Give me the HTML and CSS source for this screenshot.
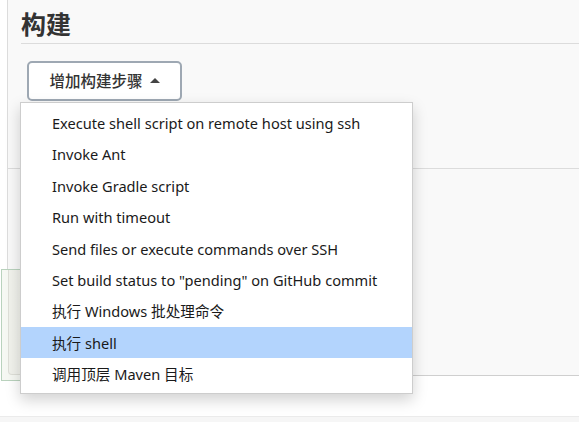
FILE: index.html
```html
<!DOCTYPE html>
<html lang="zh">
<head>
<meta charset="utf-8">
<link rel="stylesheet" href="styles.css">
</head>
<body>
<div class="page">
  <div class="panel">
    <h2 class="title">构建</h2>
    <div class="actions">
      <button class="add-btn">增加构建步骤 <span class="caret"></span></button>
    </div>
    <div class="section-line"></div>
  </div>
  <div class="ghost-box"><div class="ghost-inner"></div></div>
  <div class="footer"></div>
  <ul class="menu">
    <li>Execute shell script on remote host using ssh</li>
    <li>Invoke Ant</li>
    <li>Invoke Gradle script</li>
    <li>Run with timeout</li>
    <li>Send files or execute commands over SSH</li>
    <li>Set build status to "pending" on GitHub commit</li>
    <li>执行 Windows 批处理命令</li>
    <li class="active">执行 shell</li>
    <li>调用顶层 Maven 目标</li>
  </ul>
</div>
</body>
</html>
```
FILE: styles.css
```css
* { box-sizing: border-box; }
html, body { margin: 0; padding: 0; }
body {
  width: 579px;
  height: 422px;
  overflow: hidden;
  background: #fff;
  font-family: "Noto Sans", "Noto Sans CJK SC", sans-serif;
  color: #222;
}
.page { position: relative; height: 422px; }
.panel {
  margin-left: 7px;
  height: 376px;
  background: #f9f9f9;
  border-left: 1px solid #dcdcdc;
  border-bottom: 1px solid #cfcfcf;
  padding-left: 13px;
  padding-top: 7px;
}
.title {
  margin: 0;
  font-family: "Noto Sans CJK SC", sans-serif;
  font-size: 25px;
  font-weight: 700;
  color: #333;
  line-height: 32px;
  padding-bottom: 4px;
  border-bottom: 1px solid #dcdcdc;
}
.actions { padding: 17px 0 0 6px; }
.add-btn {
  width: 155px;
  height: 40px;
  background: #fff;
  border: 2px solid #9ea8b3;
  border-radius: 5px;
  font-family: "Noto Sans CJK SC", sans-serif;
  font-size: 15.5px;
  font-weight: 500;
  color: #333;
  padding: 0 0 2px 0;
  display: flex;
  align-items: center;
  justify-content: center;
  gap: 7px;
}
.caret {
  width: 0; height: 0;
  border-left: 5px solid transparent;
  border-right: 5px solid transparent;
  border-bottom: 5px solid #444;
  margin-top: 1px;
}
.section-line {
  margin-top: 67px;
  border-top: 1px solid #dcdcdc;
  margin-left: -13px;
}
.ghost-box {
  position: absolute;
  left: 1px;
  top: 269px;
  width: 120px;
  height: 112px;
  border: 1px solid #b9d2bd;
  background: #f6f8f3;
}
.ghost-inner {
  margin: 0 0 5px 6px;
  height: 105px;
  border: 1px solid #dedfd8;
  border-top: none;
  border-radius: 0 0 4px 4px;
  background: linear-gradient(90deg, #f1f2ec, #f3f3ef);
}
.footer {
  position: absolute;
  left: 0; right: 0;
  top: 416px;
  height: 6px;
  border-top: 1px solid #ebebeb;
  background: #f6f6f6;
}
.menu {
  position: absolute;
  left: 20px;
  top: 102px;
  width: 393px;
  height: 292px;
  margin: 0;
  padding: 4px 0;
  list-style: none;
  background: #fff;
  border: 1px solid #cdcdcd;
  box-shadow: 0 6px 14px rgba(0,0,0,0.18);
}
.menu li {
  height: 31.4px;
  line-height: 32px;
  padding-left: 31px;
  font-size: 14.6px;
  color: #1a1a1a;
  white-space: nowrap;
}
.menu li.active { background: #b3d4fd; }
```
